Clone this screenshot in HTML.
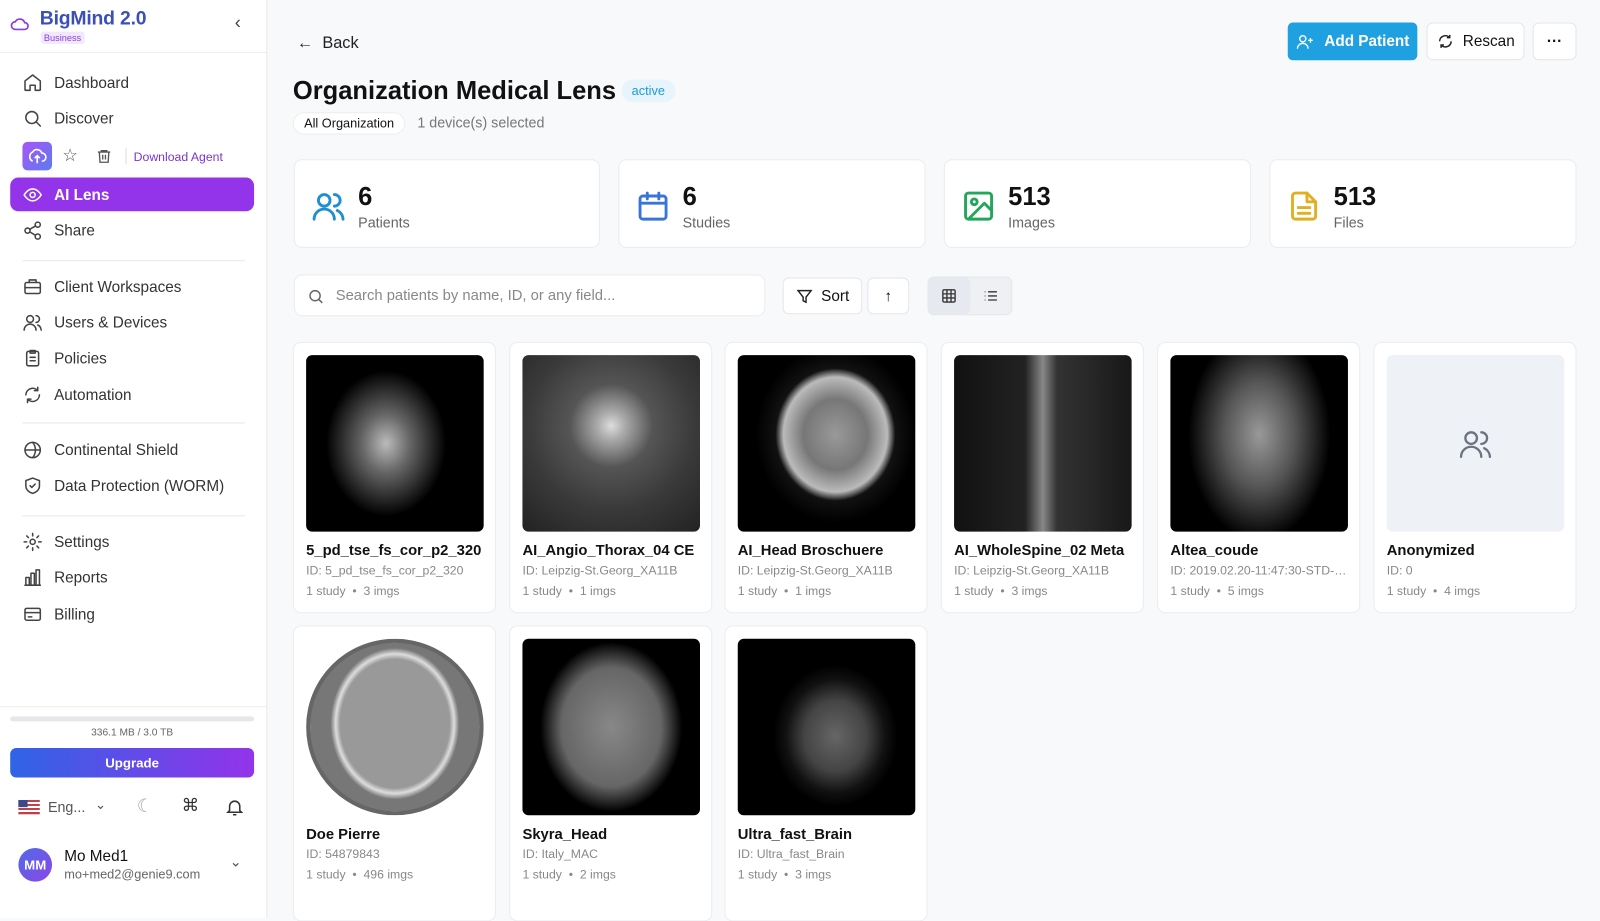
<!DOCTYPE html>
<html><head><meta charset="utf-8"><style>
*{box-sizing:border-box;margin:0;padding:0}
body{width:1600px;height:889px;overflow:hidden;background:#f8f9fb;font-family:"Liberation Sans",sans-serif;color:#111;position:relative}
#w{position:absolute;left:0;top:0;width:1568px;height:872px;transform:scale(1.0204);transform-origin:0 0}
.sb{position:absolute;left:0;top:0;width:262px;height:900px;background:#fff;border-right:1px solid #e8e8ec}
.abs{position:absolute}
.nav{position:absolute;left:22px;font-size:15px;color:#333;display:flex;align-items:center}
.nav svg{width:20px;height:20px;margin-right:11px;stroke:#444;fill:none;stroke-width:1.8;stroke-linecap:round;stroke-linejoin:round}
.sep{position:absolute;left:22px;width:218px;height:1px;background:#e6e6ea}
.card{position:absolute;background:#fff;border:1px solid #ececf0;border-radius:8px}
.stat svg{position:absolute;left:16px;top:28px;width:34px;height:34px;fill:none;stroke-width:2;stroke-linecap:round;stroke-linejoin:round}
.stat .n{position:absolute;left:62px;top:22px;font-size:25px;font-weight:bold}
.stat .l{position:absolute;left:62px;top:53px;font-size:14px;color:#666}
.pc{width:199px;height:266px}
.pc .img{position:absolute;left:12px;top:12px;width:174px;height:173px;border-radius:6px;background:#000;overflow:hidden}
.pc .t{position:absolute;left:12px;top:196px;font-size:14.5px;font-weight:bold;white-space:nowrap}
.pc .i{position:absolute;left:12px;top:216px;font-size:12px;color:#888;white-space:nowrap;overflow:hidden;width:176px;text-overflow:ellipsis}
.pc .s{position:absolute;left:12px;top:236px;font-size:12px;color:#888;white-space:nowrap}
.btn{position:absolute;background:#fff;border:1px solid #e6e6ea;border-radius:6px;display:flex;align-items:center;justify-content:center;font-size:15px}
</style></head><body><div id="w">
<div class="sb">
 <svg class="abs" style="left:10px;top:14px" width="20" height="18" viewBox="0 0 24 20" fill="none" stroke="#8b3fd8" stroke-width="2"><path d="M6 17h11a4 4 0 0 0 0-8 6 6 0 0 0-11-1 4.5 4.5 0 0 0 0 9z"/></svg>
 <div class="abs" style="left:39px;top:8px;font-size:19px;color:#3a4fb8;font-weight:bold;letter-spacing:-.2px">BigMind 2.0</div>
 <div class="abs" style="left:40px;top:31px;font-size:9px;color:#8b3fd8;background:#f2e8fd;padding:1px 3px;border-radius:3px">Business</div>
 <div class="abs" style="left:230px;top:12px;font-size:18px;color:#444">‹</div>
 <div class="abs" style="left:0;top:51px;width:261px;height:1px;background:#eee"></div>
 <div class="nav" style="top:71px"><svg viewBox="0 0 24 24"><path d="M3 10l9-7 9 7v10a1 1 0 0 1-1 1h-5v-6h-6v6H4a1 1 0 0 1-1-1z"/></svg>Dashboard</div>
 <div class="nav" style="top:106px"><svg viewBox="0 0 24 24"><circle cx="11" cy="11" r="7"/><path d="M21 21l-5-5"/></svg>Discover</div>
 <div class="abs" style="left:22px;top:139px;width:29px;height:28px;border-radius:5px;background:linear-gradient(135deg,#a855f7,#5b7cf0)"><svg width="29" height="28" viewBox="0 0 29 28" fill="none" stroke="#fff" stroke-width="1.6"><path d="M10 19a5 5 0 0 1 0-9 5 5 0 0 1 9 1 4 4 0 0 1 0 8"/><path d="M14.5 21v-7M12 16l2.5-2.5L17 16"/></svg></div>
 <div class="abs" style="left:61px;top:143px;font-size:17px;color:#555">☆</div>
 <svg class="abs" style="left:94px;top:145px" width="16" height="16" viewBox="0 0 24 24" fill="none" stroke="#555" stroke-width="2"><path d="M3 6h18M8 6V4h8v2M5 6l1 15h12l1-15M10 10v7M14 10v7"/></svg>
 <div class="abs" style="left:123px;top:145px;width:1px;height:16px;background:#ddd"></div>
 <div class="abs" style="left:131px;top:147px;font-size:12px;color:#7b35c8">Download Agent</div>
 <div class="abs" style="left:10px;top:174px;width:239px;height:33px;border-radius:8px;background:#9333ea"></div>
 <div class="nav" style="top:181px;color:#fff;font-weight:bold"><svg viewBox="0 0 24 24" style="stroke:#fff"><path d="M2 12s4-7 10-7 10 7 10 7-4 7-10 7S2 12 2 12z"/><circle cx="12" cy="12" r="3"/></svg>AI Lens</div>
 <div class="nav" style="top:216px"><svg viewBox="0 0 24 24"><circle cx="18" cy="5" r="3"/><circle cx="6" cy="12" r="3"/><circle cx="18" cy="19" r="3"/><path d="M8.6 13.5l6.8 4M15.4 6.5l-6.8 4"/></svg>Share</div>
 <div class="sep" style="top:255px"></div>
 <div class="nav" style="top:271px"><svg viewBox="0 0 24 24"><rect x="3" y="7" width="18" height="13" rx="2"/><path d="M8 7V4h8v3M3 13h18"/></svg>Client Workspaces</div>
 <div class="nav" style="top:306px"><svg viewBox="0 0 24 24"><circle cx="9" cy="8" r="4"/><path d="M2 21a7 7 0 0 1 14 0M16 4a4 4 0 0 1 0 8M22 21a7 7 0 0 0-4-6"/></svg>Users &amp; Devices</div>
 <div class="nav" style="top:341px"><svg viewBox="0 0 24 24"><rect x="5" y="4" width="14" height="17" rx="2"/><path d="M9 3h6v3H9zM9 11h6M9 15h6"/></svg>Policies</div>
 <div class="nav" style="top:377px"><svg viewBox="0 0 24 24"><path d="M20 12a8 8 0 0 1-14 5M4 12a8 8 0 0 1 14-5M18 3v4h-4M6 21v-4h4"/></svg>Automation</div>
 <div class="sep" style="top:414px"></div>
 <div class="nav" style="top:431px"><svg viewBox="0 0 24 24"><circle cx="12" cy="12" r="9"/><path d="M3 12h18M12 3a14 14 0 0 1 0 18"/></svg>Continental Shield</div>
 <div class="nav" style="top:466px"><svg viewBox="0 0 24 24"><path d="M12 3l8 3v6c0 5-4 8-8 9-4-1-8-4-8-9V6z"/><path d="M9 12l2 2 4-4"/></svg>Data Protection (WORM)</div>
 <div class="sep" style="top:505px"></div>
 <div class="nav" style="top:521px"><svg viewBox="0 0 24 24"><circle cx="12" cy="12" r="3"/><path d="M12 2v3M12 19v3M2 12h3M19 12h3M5 5l2 2M17 17l2 2M5 19l2-2M17 7l2-2"/></svg>Settings</div>
 <div class="nav" style="top:556px"><svg viewBox="0 0 24 24"><path d="M4 21V12h4v9M10 21V7h4v14M16 21V3h4v18M3 21h18"/></svg>Reports</div>
 <div class="nav" style="top:592px"><svg viewBox="0 0 24 24"><rect x="3" y="5" width="18" height="14" rx="2"/><path d="M3 10h18M7 15h4"/></svg>Billing</div>
 <div class="abs" style="left:0;top:692px;width:261px;height:1px;background:#eee"></div>
 <div class="abs" style="left:10px;top:702px;width:239px;height:5px;border-radius:3px;background:#e5e7eb"></div>
 <div class="abs" style="left:0;top:713px;width:259px;text-align:center;font-size:10px;color:#666">336.1 MB / 3.0 TB</div>
 <div class="abs" style="left:10px;top:733px;width:239px;height:29px;border-radius:6px;background:linear-gradient(90deg,#2f64e6,#9333ea);color:#fff;font-size:13px;font-weight:bold;text-align:center;line-height:29px">Upgrade</div>
 <div class="abs" style="left:18px;top:784px;width:21px;height:14px;background:repeating-linear-gradient(#c0404a 0 2px,#fff 2px 4px)"><div style="width:9px;height:7px;background:#3b4a8a"></div></div>
 <div class="abs" style="left:47px;top:783px;font-size:14px;color:#555">Eng...</div>
 <div class="abs" style="left:93px;top:781px;font-size:13px;color:#555">⌄</div>
 <div class="abs" style="left:134px;top:780px;font-size:18px;color:#aaa">☾</div>
 <div class="abs" style="left:178px;top:780px;font-size:17px;color:#333">⌘</div>
 <svg class="abs" style="left:220px;top:781px" width="20" height="20" viewBox="0 0 24 24" fill="none" stroke="#333" stroke-width="1.8"><path d="M6 16V11a6 6 0 0 1 12 0v5l2 2H4zM10 21h4"/></svg>
 <div class="abs" style="left:18px;top:831px;width:33px;height:33px;border-radius:50%;background:linear-gradient(135deg,#4f6bea,#8b46e6);color:#fff;font-size:13px;font-weight:bold;text-align:center;line-height:33px">MM</div>
 <div class="abs" style="left:63px;top:831px;font-size:15px;color:#111">Mo Med1</div>
 <div class="abs" style="left:63px;top:850px;font-size:12.5px;color:#666">mo+med2@genie9.com</div>
 <div class="abs" style="left:225px;top:836px;font-size:14px;color:#555">⌄</div>
</div>

<div class="abs" style="left:291px;top:34px;font-size:16px;color:#222">←&nbsp;&nbsp;Back</div>
<div class="abs" style="left:287px;top:75px;font-size:25px;font-weight:bold;color:#111">Organization Medical Lens</div>
<div class="abs" style="left:609px;top:78px;height:22px;padding:0 10px;border-radius:11px;background:#e8f4fb;color:#1c9bd6;font-size:12.5px;line-height:22px">active</div>
<div class="abs" style="left:287px;top:110px;height:22px;padding:0 10px;border-radius:11px;border:1px solid #eee;background:#fff;font-size:12.5px;line-height:20px">All Organization</div>
<div class="abs" style="left:409px;top:112px;font-size:14px;color:#777">1 device(s) selected</div>

<div class="abs" style="left:1262px;top:22px;width:127px;height:37px;border-radius:5px;background:#1fa0e0;color:#fff;font-size:15px;font-weight:bold;display:flex;align-items:center;justify-content:center"><svg width="18" height="18" viewBox="0 0 24 24" fill="none" stroke="#fff" stroke-width="1.8" style="margin-right:10px"><circle cx="9" cy="8" r="4"/><path d="M2 21a7 7 0 0 1 14 0M19 7v6M16 10h6"/></svg>Add Patient</div>
<div class="btn" style="left:1398px;top:22px;width:96px;height:37px"><svg width="17" height="17" viewBox="0 0 24 24" fill="none" stroke="#222" stroke-width="2" style="margin-right:9px"><path d="M20 12a8 8 0 0 1-14 5M4 12a8 8 0 0 1 14-5M18 3v4h-4M6 21v-4h4"/></svg>Rescan</div>
<div class="btn" style="left:1502px;top:22px;width:43px;height:37px;font-weight:bold">···</div>

<div class="card stat" style="left:288px;top:156px;width:300px;height:87px"><svg viewBox="0 0 24 24" stroke="#1f8fd0"><circle cx="9" cy="8" r="4"/><path d="M2 21a7 7 0 0 1 14 0M16 4a4 4 0 0 1 0 8M22 21a7 7 0 0 0-4-6"/></svg><div class="n">6</div><div class="l">Patients</div></div>
<div class="card stat" style="left:606px;top:156px;width:301px;height:87px"><svg viewBox="0 0 24 24" stroke="#3b74d8"><rect x="3" y="5" width="18" height="16" rx="2"/><path d="M3 10h18M8 3v4M16 3v4"/></svg><div class="n">6</div><div class="l">Studies</div></div>
<div class="card stat" style="left:925px;top:156px;width:301px;height:87px"><svg viewBox="0 0 24 24" stroke="#22a65a"><rect x="3" y="3" width="18" height="18" rx="2"/><circle cx="9" cy="9" r="2"/><path d="M21 15l-5-5L5 21"/></svg><div class="n">513</div><div class="l">Images</div></div>
<div class="card stat" style="left:1244px;top:156px;width:301px;height:87px"><svg viewBox="0 0 24 24" stroke="#e0b020"><path d="M14 3H6a2 2 0 0 0-2 2v14a2 2 0 0 0 2 2h12a2 2 0 0 0 2-2V9z"/><path d="M14 3v6h6M8 13h8M8 17h8"/></svg><div class="n">513</div><div class="l">Files</div></div>

<div class="card" style="left:288px;top:269px;width:462px;height:41px"><svg class="abs" style="left:12px;top:12px" width="17" height="17" viewBox="0 0 24 24" fill="none" stroke="#666" stroke-width="2"><circle cx="11" cy="11" r="7"/><path d="M21 21l-5-5"/></svg><div class="abs" style="left:40px;top:12px;font-size:14.5px;color:#888">Search patients by name, ID, or any field...</div></div>
<div class="btn" style="left:767px;top:272px;width:78px;height:36px"><svg width="17" height="17" viewBox="0 0 24 24" fill="none" stroke="#222" stroke-width="2" style="margin-right:8px"><path d="M3 4h18l-7 9v7l-4-2v-5z"/></svg>Sort</div>
<div class="btn" style="left:850px;top:272px;width:41px;height:36px">↑</div>
<div class="abs" style="left:909px;top:271px;width:83px;height:38px;border-radius:6px;background:#eef0f4;border:1px solid #e6e6ea"></div>
<div class="abs" style="left:910px;top:272px;width:41px;height:36px;border-radius:6px;background:#e6e9ef"></div>
<svg class="abs" style="left:922px;top:282px" width="16" height="16" viewBox="0 0 24 24" fill="none" stroke="#333" stroke-width="2"><rect x="3" y="3" width="18" height="18" rx="2"/><path d="M3 9h18M3 15h18M9 3v18M15 3v18"/></svg>
<svg class="abs" style="left:963px;top:282px" width="16" height="16" viewBox="0 0 24 24" fill="none" stroke="#333" stroke-width="2"><path d="M8 6h13M8 12h13M8 18h13M3 6h1M3 12h1M3 18h1"/></svg>

<div class="card pc" style="left:287px;top:335px"><div class="img" style="background:radial-gradient(ellipse 45% 55% at 45% 50%,#bbb 0,#666 30%,#222 60%,#000 75%)"></div><div class="t">5_pd_tse_fs_cor_p2_320</div><div class="i">ID: 5_pd_tse_fs_cor_p2_320</div><div class="s">1 study &nbsp;•&nbsp; 3 imgs</div></div>
<div class="card pc" style="left:499px;top:335px"><div class="img" style="background:radial-gradient(circle at 50% 40%,#ddd 0,#aaa 10%,#555 30%,#3a3a3a 60%,#222 100%)"></div><div class="t">AI_Angio_Thorax_04 CE</div><div class="i">ID: Leipzig-St.Georg_XA11B</div><div class="s">1 study &nbsp;•&nbsp; 1 imgs</div></div>
<div class="card pc" style="left:710px;top:335px"><div class="img" style="background:radial-gradient(ellipse 45% 50% at 55% 45%,#999 0,#777 40%,#bbb 65%,#111 75%,#000 100%)"></div><div class="t">AI_Head Broschuere</div><div class="i">ID: Leipzig-St.Georg_XA11B</div><div class="s">1 study &nbsp;•&nbsp; 1 imgs</div></div>
<div class="card pc" style="left:922px;top:335px"><div class="img" style="background:linear-gradient(90deg,#111 0,#222 40%,#888 50%,#333 58%,#181818 100%)"></div><div class="t">AI_WholeSpine_02 Meta</div><div class="i">ID: Leipzig-St.Georg_XA11B</div><div class="s">1 study &nbsp;•&nbsp; 3 imgs</div></div>
<div class="card pc" style="left:1134px;top:335px"><div class="img" style="background:radial-gradient(ellipse 40% 60% at 50% 45%,#999 0,#555 50%,#222 80%,#000 100%)"></div><div class="t">Altea_coude</div><div class="i">ID: 2019.02.20-11:47:30-STD-1.3.12.2</div><div class="s">1 study &nbsp;•&nbsp; 5 imgs</div></div>
<div class="card pc" style="left:1346px;top:335px"><div class="img" style="background:#eef1f6"><svg class="abs" style="left:70px;top:70px" width="34" height="34" viewBox="0 0 24 24" fill="none" stroke="#6b7280" stroke-width="1.6" stroke-linecap="round"><circle cx="9" cy="8" r="4"/><path d="M2 21a7 7 0 0 1 14 0M16 4a4 4 0 0 1 0 8M22 21a7 7 0 0 0-4-6"/></svg></div><div class="t">Anonymized</div><div class="i">ID: 0</div><div class="s">1 study &nbsp;•&nbsp; 4 imgs</div></div>

<div class="card pc" style="left:287px;top:613px;height:290px"><div class="img" style="background:#fff;border-radius:0"><div style="position:absolute;left:0;top:0;width:174px;height:173px;border-radius:50%;background:radial-gradient(ellipse 38% 45% at 50% 48%,#999 0,#999 85%,#ddd 92%,#777 100%);border:4px solid #666"></div></div><div class="t">Doe Pierre</div><div class="i">ID: 54879843</div><div class="s">1 study &nbsp;•&nbsp; 496 imgs</div></div>
<div class="card pc" style="left:499px;top:613px;height:290px"><div class="img" style="background:radial-gradient(ellipse 40% 48% at 50% 50%,#888 0,#666 70%,#222 90%,#000 100%)"></div><div class="t">Skyra_Head</div><div class="i">ID: Italy_MAC</div><div class="s">1 study &nbsp;•&nbsp; 2 imgs</div></div>
<div class="card pc" style="left:710px;top:613px;height:290px"><div class="img" style="background:radial-gradient(ellipse 35% 40% at 55% 55%,#666 0,#444 50%,#111 80%,#000 100%)"></div><div class="t">Ultra_fast_Brain</div><div class="i">ID: Ultra_fast_Brain</div><div class="s">1 study &nbsp;•&nbsp; 3 imgs</div></div>
</div></body></html>
